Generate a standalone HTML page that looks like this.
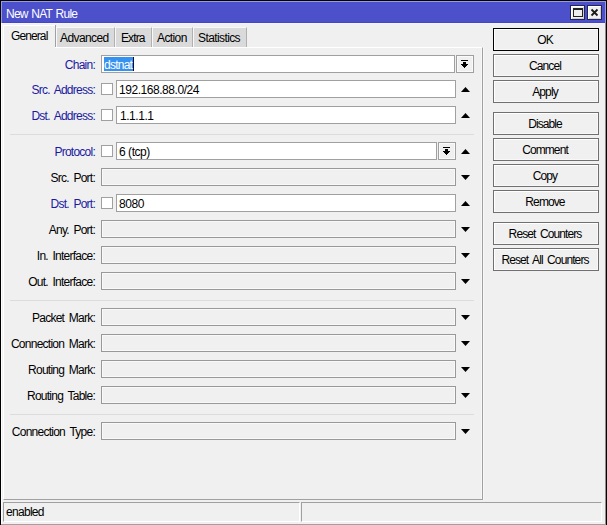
<!DOCTYPE html>
<html><head><meta charset="utf-8">
<style>
*{box-sizing:border-box;margin:0;padding:0}
html,body{width:607px;height:525px;overflow:hidden;background:#f0f0f0}
body{position:relative;font-family:"Liberation Sans",sans-serif;font-size:12px;letter-spacing:-0.6px;color:#000}
.a{position:absolute}
#title{left:2px;top:2px;width:603px;height:21px;background:#4c50cb}
#titlehl{left:2px;top:23px;width:603px;height:1px;background:#f4f4ff}
#ttext{left:6px;top:7px;color:#fff;line-height:14px;letter-spacing:-0.75px;word-spacing:1px}
.tbtn{top:5px;width:15px;height:15px;background:#f0f0f0;border:1px solid #23235a;box-shadow:inset 1px 1px 0 #fff, inset -1px -1px 0 #d0d0d0}
.tab{top:27px;height:20px;background:#dadada;border-top:1px solid #f8f8f8;border-left:1px solid #f8f8f8;border-right:1px solid #b0b0b0}
.tabt{line-height:13px;white-space:nowrap;}
#panel{left:3px;top:47px;width:480px;height:453px;border-top:1px solid #fff;border-left:1px solid #fff;border-right:1px solid #a0a0a0;border-bottom:1px solid #a0a0a0}
.lbl{width:95px;left:0;text-align:right;line-height:13px;white-space:nowrap;letter-spacing:-0.75px;word-spacing:2px}
.blue{color:#1a1aa0}
.inp{height:18px;background:#fff;border:1px solid #a0a0a0}
.dis{height:18px;background:#f0f0f0;border:1px solid #999;box-shadow:inset 0 0 0 1px #f8f8f8}
.cb{width:12px;height:12px;background:#fff;border:1px solid #a0a0a0}
.itxt{line-height:13px;white-space:nowrap;letter-spacing:-0.45px}
.sep{height:1px;background:#dcdcdc;left:10px;width:464px}
.sepw{height:1px;background:#fafafa;left:10px;width:464px}
.up{width:0;height:0;border-left:5px solid transparent;border-right:5px solid transparent;border-bottom:5px solid #000}
.dn{width:0;height:0;border-left:5px solid transparent;border-right:5px solid transparent;border-top:5px solid #000}
.ddb{width:18px;height:18px;background:#f0f0f0;border:1px solid #a0a0a0;box-shadow:inset 0 0 0 1px #fafafa}
.btn{left:493px;width:106px;height:23px;border:1px solid #707070;background:#f0f0f0;box-shadow:inset 1px 1px 0 #fff,inset -1px -1px 0 #f8f8f8;text-align:center;line-height:22px;letter-spacing:-0.9px;word-spacing:2px;white-space:nowrap;padding-right:2px}
.stat{top:502px;height:20px;border-top:1px solid #a0a0a0;border-left:1px solid #a0a0a0;border-right:1px solid #fff;border-bottom:1px solid #fff}
</style></head><body>
<div class="a" style="left:0;top:0;width:607px;height:1px;background:#000"></div>
<div class="a" style="left:0;top:0;width:1px;height:525px;background:#000"></div>
<div class="a" style="left:606px;top:0;width:1px;height:525px;background:#000"></div>
<div class="a" style="left:1px;top:1px;width:605px;height:1px;background:#9a9ae0"></div>
<div class="a" style="left:1px;top:1px;width:1px;height:22px;background:#9a9ae0"></div>
<div class="a" style="left:605px;top:1px;width:1px;height:22px;background:#9a9ae0"></div>
<div class="a" style="left:1px;top:23px;width:1px;height:501px;background:#fff"></div>
<div class="a" style="left:605px;top:23px;width:1px;height:501px;background:#909090"></div>
<div class="a" style="left:1px;top:524px;width:605px;height:1px;background:#a0a0a0"></div>
<div id="title" class="a"></div>
<div class="a" style="left:2px;top:22px;width:603px;height:1px;background:#4446c2"></div>
<div id="titlehl" class="a"></div>
<div id="ttext" class="a">New NAT Rule</div>
<div class="a tbtn" style="left:570px"></div>
<div class="a" style="left:573px;top:8px;width:10px;height:9px;border:1px solid #222;border-top:2px solid #222;background:#eee"></div>
<div class="a tbtn" style="left:587px"></div>
<svg class="a" style="left:590px;top:8px" width="9" height="9" viewBox="0 0 9 9"><path d="M1.5 1.5L7.5 7.5M7.5 1.5L1.5 7.5" stroke="#1a1a1a" stroke-width="1.8"/></svg>

<!-- tabs -->
<div id="panel" class="a"></div>
<div class="a" style="left:3px;top:25px;width:52px;height:23px;background:#f0f0f0;border-top:1px solid #fff;border-left:1px solid #fff"></div>
<div class="a" style="left:55px;top:25px;width:1px;height:22px;background:#a0a0a0"></div>
<div class="a tabt" style="left:11px;top:30px;letter-spacing:-0.9px">General</div>
<div class="a tab" style="left:56px;width:59px"></div>
<div class="a tabt" style="left:60px;top:32px">Advanced</div>
<div class="a tab" style="left:115px;width:37px"></div>
<div class="a tabt" style="left:121px;top:32px;letter-spacing:-0.9px">Extra</div>
<div class="a tab" style="left:152px;width:41px"></div>
<div class="a tabt" style="left:157px;top:32px">Action</div>
<div class="a tab" style="left:193px;width:54px"></div>
<div class="a tabt" style="left:198px;top:32px">Statistics</div>


<div class="a" style="left:481px;top:48px;width:1px;height:451px;background:#f8f8f8"></div>
<div class="a" style="left:483px;top:47px;width:1px;height:453px;background:#f8f8f8"></div>
<!-- rows -->
<div class="a lbl blue" style="top:59px">Chain:</div>
<div class="a inp" style="left:101px;top:55px;width:354px"></div>
<div class="a" style="left:104px;top:57px;width:29px;height:14px;background:#3592f0"></div>
<div class="a" style="left:133px;top:57px;width:1px;height:14px;background:#0a0a30"></div>
<div class="a itxt" style="left:104px;top:59px;color:#fff;letter-spacing:-0.75px">dstnat</div>
<div class="a ddb" style="left:456px;top:55px"></div>
<svg class="a" style="left:461px;top:60px" width="7" height="8" shape-rendering="crispEdges"><rect x="0" y="0" width="7" height="1"/><rect x="2" y="2" width="3" height="2"/><rect x="0" y="4" width="7" height="1"/><rect x="1" y="5" width="5" height="1"/><rect x="2" y="6" width="3" height="1"/><rect x="3" y="7" width="1" height="1"/></svg>
<div class="a lbl blue" style="top:84px">Src. Address:</div>
<div class="a cb" style="left:101px;top:83px"></div>
<div class="a inp" style="left:116px;top:80px;width:340px"></div>
<div class="a itxt" style="left:119px;top:84px">192.168.88.0/24</div>
<svg class="a" style="left:461px;top:87px" width="9" height="5"><path d="M0 5L9 5L4.5 0Z"/></svg>

<div class="a lbl blue" style="top:110px">Dst. Address:</div>
<div class="a cb" style="left:101px;top:109px"></div>
<div class="a inp" style="left:116px;top:106px;width:340px"></div>
<div class="a itxt" style="left:120px;top:110px">1.1.1.1</div>
<svg class="a" style="left:461px;top:113px" width="9" height="5"><path d="M0 5L9 5L4.5 0Z"/></svg>

<div class="a sep" style="top:134px"></div>

<div class="a lbl blue" style="top:146px">Protocol:</div>
<div class="a cb" style="left:101px;top:145px"></div>
<div class="a inp" style="left:116px;top:142px;width:321px"></div>
<div class="a itxt" style="left:119px;top:146px">6 (tcp)</div>
<div class="a ddb" style="left:438px;top:142px"></div>
<svg class="a" style="left:443px;top:147px" width="7" height="8" shape-rendering="crispEdges"><rect x="0" y="0" width="7" height="1"/><rect x="2" y="2" width="3" height="2"/><rect x="0" y="4" width="7" height="1"/><rect x="1" y="5" width="5" height="1"/><rect x="2" y="6" width="3" height="1"/><rect x="3" y="7" width="1" height="1"/></svg>
<svg class="a" style="left:461px;top:149px" width="9" height="5"><path d="M0 5L9 5L4.5 0Z"/></svg>

<div class="a lbl" style="top:172px">Src. Port:</div>
<div class="a dis" style="left:101px;top:168px;width:355px"></div>
<svg class="a" style="left:461px;top:175px" width="9" height="5"><path d="M0 0L9 0L4.5 5Z"/></svg>

<div class="a lbl blue" style="top:198px">Dst. Port:</div>
<div class="a cb" style="left:101px;top:197px"></div>
<div class="a inp" style="left:116px;top:194px;width:340px"></div>
<div class="a itxt" style="left:119px;top:198px">8080</div>
<svg class="a" style="left:461px;top:201px" width="9" height="5"><path d="M0 5L9 5L4.5 0Z"/></svg>

<div class="a lbl" style="top:224px">Any. Port:</div>
<div class="a dis" style="left:101px;top:220px;width:355px"></div>
<svg class="a" style="left:461px;top:227px" width="9" height="5"><path d="M0 0L9 0L4.5 5Z"/></svg>

<div class="a lbl" style="top:250px">In. Interface:</div>
<div class="a dis" style="left:101px;top:246px;width:355px"></div>
<svg class="a" style="left:461px;top:253px" width="9" height="5"><path d="M0 0L9 0L4.5 5Z"/></svg>

<div class="a lbl" style="top:276px">Out. Interface:</div>
<div class="a dis" style="left:101px;top:272px;width:355px"></div>
<svg class="a" style="left:461px;top:279px" width="9" height="5"><path d="M0 0L9 0L4.5 5Z"/></svg>

<div class="a sep" style="top:300px"></div>

<div class="a lbl" style="top:312px">Packet Mark:</div>
<div class="a dis" style="left:101px;top:308px;width:355px"></div>
<svg class="a" style="left:461px;top:315px" width="9" height="5"><path d="M0 0L9 0L4.5 5Z"/></svg>

<div class="a lbl" style="top:338px">Connection Mark:</div>
<div class="a dis" style="left:101px;top:334px;width:355px"></div>
<svg class="a" style="left:461px;top:341px" width="9" height="5"><path d="M0 0L9 0L4.5 5Z"/></svg>

<div class="a lbl" style="top:364px">Routing Mark:</div>
<div class="a dis" style="left:101px;top:360px;width:355px"></div>
<svg class="a" style="left:461px;top:367px" width="9" height="5"><path d="M0 0L9 0L4.5 5Z"/></svg>

<div class="a lbl" style="top:390px">Routing Table:</div>
<div class="a dis" style="left:101px;top:386px;width:355px"></div>
<svg class="a" style="left:461px;top:393px" width="9" height="5"><path d="M0 0L9 0L4.5 5Z"/></svg>

<div class="a sep" style="top:414px"></div>

<div class="a lbl" style="top:426px">Connection Type:</div>
<div class="a dis" style="left:101px;top:422px;width:355px"></div>
<svg class="a" style="left:461px;top:429px" width="9" height="5"><path d="M0 0L9 0L4.5 5Z"/></svg>

<!-- buttons -->
<div class="a btn" style="top:28px;border-color:#000">OK</div>
<div class="a btn" style="top:54px">Cancel</div>
<div class="a btn" style="top:80px">Apply</div>
<div class="a btn" style="top:112px">Disable</div>
<div class="a btn" style="top:138px">Comment</div>
<div class="a btn" style="top:164px">Copy</div>
<div class="a btn" style="top:190px">Remove</div>
<div class="a btn" style="top:222px">Reset Counters</div>
<div class="a btn" style="top:248px">Reset All Counters</div>

<!-- status -->
<div class="a stat" style="left:3px;width:297px"></div>
<div class="a itxt" style="left:6px;top:506px;letter-spacing:-0.7px">enabled</div>
<div class="a stat" style="left:301px;width:301px"></div>
</body></html>
